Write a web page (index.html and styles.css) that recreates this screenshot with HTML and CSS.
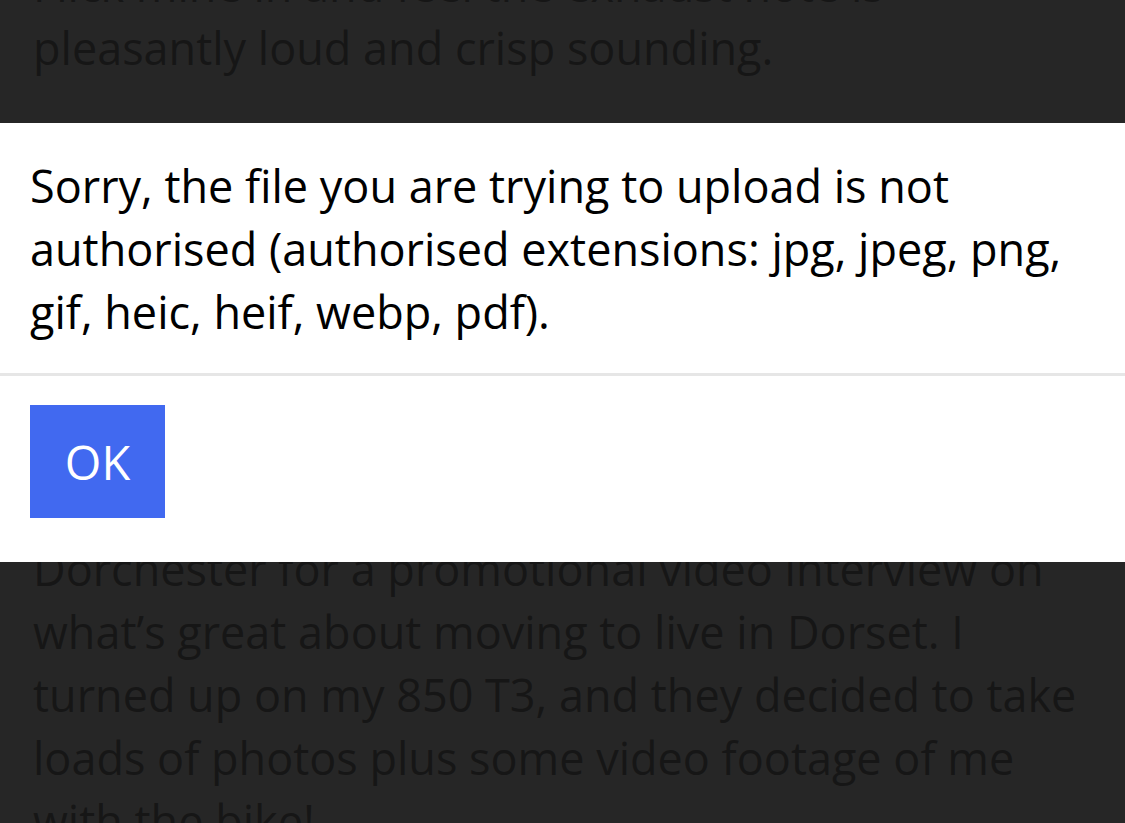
FILE: index.html
```html
<!DOCTYPE html>
<html lang="en">
<head>
    <meta charset="UTF-8">
    <meta name="viewport" content="width=device-width, initial-scale=1.0">
    <link rel="stylesheet" href="styles.css">
    <title>My 850 T3</title>
</head>
<body>
    <div class="story">
        <p>Flick mine in and feel the exhaust note is pleasantly loud and crisp sounding.</p>
        <div class="photo"></div>
        <p>Dorchester for a promotional video interview on what’s great about moving to live in Dorset. I turned up on my 850 T3, and they decided to take loads of photos plus some video footage of me with the bike!</p>
    </div>

    <div class="backdrop"></div>

    <div class="dialog">
        <div class="dialog-message">
            Sorry, the file you are trying to upload is not authorised (authorised extensions: jpg, jpeg, png, gif, heic, heif, webp, pdf).
        </div>
        <div class="dialog-buttons">
            <button class="btn-ok">OK</button>
        </div>
    </div>
</body>
</html>
```

FILE: styles.css
```css
body {
    margin: 0;
    background-color: #fff;
    font-family: 'Open Sans', sans-serif;
    overflow: hidden;
}

.story {
    margin-top: -47px;
    padding: 0 33px;
    font-size: 45px;
    line-height: 63px;
    color: #969696;
}

.story p {
    margin: 0;
}

/* image area of the post, hidden behind the popup */
.photo {
    height: 392px;
    margin: 33px 0;
}

/* dark layer behind the popup */
.backdrop {
    position: fixed;
    top: 0;
    left: 0;
    right: 0;
    bottom: 0;
    background-color: rgba(0, 0, 0, 0.85);
}

.dialog {
    position: fixed;
    top: 123px;
    left: 0;
    right: 0;
    background-color: #fff;
    color: #000;
}

.dialog-message {
    padding: 31px 30px 30px;
    font-size: 45px;
    line-height: 63px;
    border-bottom: 3px solid #e6e6e6;
}

.dialog-buttons {
    padding: 29px 30px 44px;
}

.btn-ok {
    display: block;
    width: 135px;
    height: 113px;
    padding: 0;
    border: none;
    background-color: #4169f0;
    color: #fff;
    font-family: 'Open Sans', sans-serif;
    font-size: 47px;
    cursor: pointer;
}
```
